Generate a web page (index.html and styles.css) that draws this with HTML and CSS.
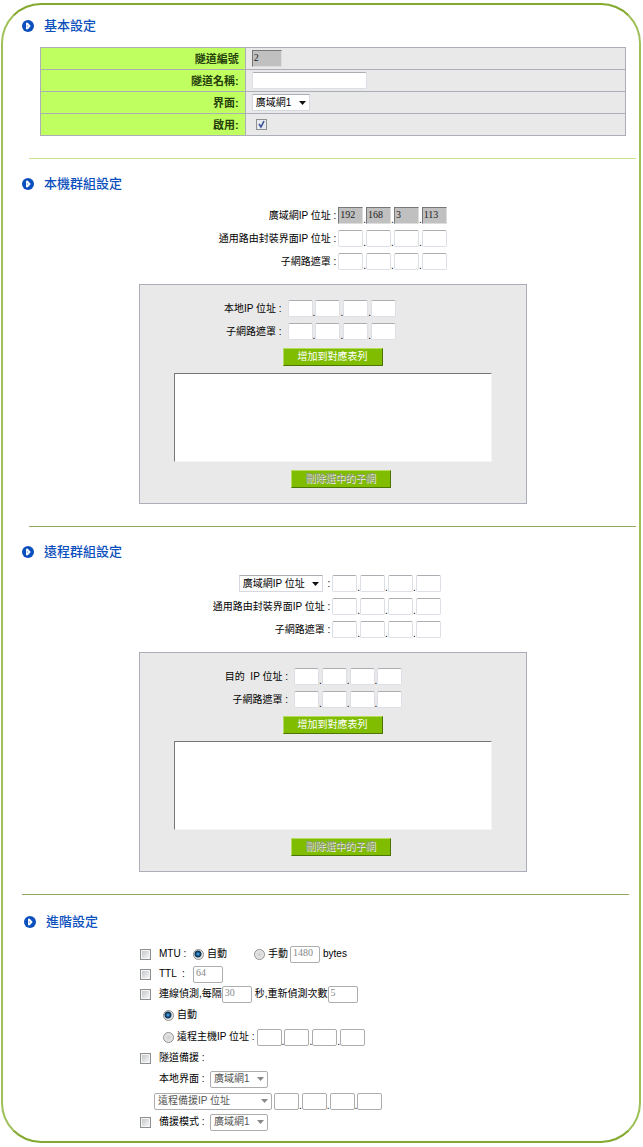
FILE: index.html
```html
<!DOCTYPE html>
<html lang="zh-Hant">
<head>
    <meta charset="UTF-8">
    <meta name="viewport" content="width=device-width, initial-scale=1.0">
    <title>隧道設定</title>
    <link rel="stylesheet" href="styles.css">
</head>
<body>
<svg width="0" height="0" class="defs">
    <symbol id="bullet" viewBox="0 0 12 12">
        <circle cx="6" cy="6" r="6" fill="#0c50bd"/>
        <path d="M4 2.7h1.8L8.7 6 5.8 9.3H4z" fill="#fff"/>
        <path d="M4.800 4.400v3.200L6.400 6z" fill="#8fb0e2"/>
    </symbol>
</svg>
<form class="frame">
    <!-- 基本設定 -->
    <h2 class="title"><svg class="bullet"><use href="#bullet"/></svg>基本設定</h2>
    <table class="basic">
        <tr>
            <th><label for="tunnelNo">隧道編號</label></th>
            <td><input type="text" id="tunnelNo" class="num locked" value="2" readonly></td>
        </tr>
        <tr>
            <th><label for="tunnelName">隧道名稱:</label></th>
            <td><input type="text" id="tunnelName" class="name"></td>
        </tr>
        <tr>
            <th><label for="iface">界面:</label></th>
            <td><select id="iface" class="wan"><option>廣域網1</option></select></td>
        </tr>
        <tr>
            <th><label for="enable">啟用:</label></th>
            <td><input type="checkbox" id="enable" class="enable" checked></td>
        </tr>
    </table>
    <hr class="light">

    <!-- 本機群組設定 -->
    <h2 class="title"><svg class="bullet"><use href="#bullet"/></svg>本機群組設定</h2>
    <div class="content">
        <div class="group">
            <div class="row">
                <label for="lw1">廣域網IP 位址 :</label>
                <span class="ip"><input type="text" id="lw1" class="locked" value="192" readonly>.<input type="text" class="locked" value="168" aria-label="廣域網IP 2" readonly>.<input type="text" class="locked" value="3" aria-label="廣域網IP 3" readonly>.<input type="text" class="locked" value="113" aria-label="廣域網IP 4" readonly></span>
            </div>
            <div class="row">
                <label for="lg1">通用路由封裝界面IP 位址 :</label>
                <span class="ip"><input type="text" id="lg1">.<input type="text" aria-label="界面IP 2">.<input type="text" aria-label="界面IP 3">.<input type="text" aria-label="界面IP 4"></span>
            </div>
            <div class="row">
                <label for="lm1">子網路遮罩 :</label>
                <span class="ip"><input type="text" id="lm1">.<input type="text" aria-label="遮罩 2">.<input type="text" aria-label="遮罩 3">.<input type="text" aria-label="遮罩 4"></span>
            </div>
        </div>
        <div class="panel">
            <div class="row">
                <label for="li1">本地IP 位址 :</label>
                <span class="ip"><input type="text" id="li1">.<input type="text" aria-label="本地IP 2">.<input type="text" aria-label="本地IP 3">.<input type="text" aria-label="本地IP 4"></span>
            </div>
            <div class="row">
                <label for="ls1">子網路遮罩 :</label>
                <span class="ip"><input type="text" id="ls1">.<input type="text" aria-label="遮罩 2">.<input type="text" aria-label="遮罩 3">.<input type="text" aria-label="遮罩 4"></span>
            </div>
            <button type="button" class="add">增加到對應表列</button>
            <select class="list" size="5" aria-label="本地對應表列"></select>
            <button type="button" class="delete" disabled>刪除選中的子網</button>
        </div>
    </div>
    <hr>

    <!-- 遠程群組設定 -->
    <h2 class="title"><svg class="bullet"><use href="#bullet"/></svg>遠程群組設定</h2>
    <div class="content">
        <div class="group remote">
            <div class="row">
                <label for="rw1"><select class="type" aria-label="遠程類型"><option>廣域網IP 位址</option></select> :</label>
                <span class="ip"><input type="text" id="rw1">.<input type="text" aria-label="廣域網IP 2">.<input type="text" aria-label="廣域網IP 3">.<input type="text" aria-label="廣域網IP 4"></span>
            </div>
            <div class="row">
                <label for="rg1">通用路由封裝界面IP 位址 :</label>
                <span class="ip"><input type="text" id="rg1">.<input type="text" aria-label="界面IP 2">.<input type="text" aria-label="界面IP 3">.<input type="text" aria-label="界面IP 4"></span>
            </div>
            <div class="row">
                <label for="rm1">子網路遮罩 :</label>
                <span class="ip"><input type="text" id="rm1">.<input type="text" aria-label="遮罩 2">.<input type="text" aria-label="遮罩 3">.<input type="text" aria-label="遮罩 4"></span>
            </div>
        </div>
        <div class="panel remote">
            <div class="row">
                <label for="ri1">目的&nbsp; IP 位址 :</label>
                <span class="ip"><input type="text" id="ri1">.<input type="text" aria-label="目的IP 2">.<input type="text" aria-label="目的IP 3">.<input type="text" aria-label="目的IP 4"></span>
            </div>
            <div class="row">
                <label for="rs1">子網路遮罩 :</label>
                <span class="ip"><input type="text" id="rs1">.<input type="text" aria-label="遮罩 2">.<input type="text" aria-label="遮罩 3">.<input type="text" aria-label="遮罩 4"></span>
            </div>
            <button type="button" class="add">增加到對應表列</button>
            <select class="list" size="5" aria-label="遠程對應表列"></select>
            <button type="button" class="delete" disabled>刪除選中的子網</button>
        </div>
    </div>
    <hr class="last">

    <!-- 進階設定 -->
    <h2 class="title adv-title"><svg class="bullet"><use href="#bullet"/></svg>進階設定</h2>
    <div class="advanced">
        <div class="opt">
            <input type="checkbox" id="mtu">
            <label for="mtu" class="key">MTU :</label>
            <input type="radio" name="mtuMode" id="mtuAuto" checked>
            <label for="mtuAuto" class="auto">自動</label>
            <input type="radio" name="mtuMode" id="mtuManual">
            <label for="mtuManual">手動</label>
            <input type="text" class="num" value="1480" aria-label="MTU bytes" disabled>
            <span class="unit">bytes</span>
        </div>
        <div class="opt">
            <input type="checkbox" id="ttl">
            <label for="ttl" class="key">TTL &nbsp;:</label>
            <input type="text" class="num" value="64" aria-label="TTL" disabled>
        </div>
        <div class="opt">
            <input type="checkbox" id="dpd">
            <label for="dpd">連線偵測,每隔</label>
            <input type="text" class="num flush" value="30" aria-label="秒" disabled>
            <label for="retry" class="unit">秒,重新偵測次數</label>
            <input type="text" class="num flush" id="retry" value="5" disabled>
        </div>
        <div class="opt tall sub">
            <input type="radio" name="dpdMode" id="dpdAuto" checked>
            <label for="dpdAuto">自動</label>
        </div>
        <div class="opt tall sub">
            <input type="radio" name="dpdMode" id="dpdHost">
            <label for="dpdHost">遠程主機IP 位址 :</label>
            <span class="ip"><input type="text" aria-label="主機IP 1" disabled>.<input type="text" aria-label="主機IP 2" disabled>.<input type="text" aria-label="主機IP 3" disabled>.<input type="text" aria-label="主機IP 4" disabled></span>
        </div>
        <div class="opt">
            <input type="checkbox" id="backup">
            <label for="backup">隧道備援 :</label>
        </div>
        <div class="opt tall nobox">
            <label for="localIf" class="wide">本地界面 :</label>
            <select id="localIf" class="wan" disabled><option>廣域網1</option></select>
        </div>
        <div class="opt tall backup-ip">
            <select class="backup-type" aria-label="遠程備援" disabled><option>遠程備援IP 位址</option></select>
            <span class="ip"><input type="text" aria-label="備援IP 1" disabled>.<input type="text" aria-label="備援IP 2" disabled>.<input type="text" aria-label="備援IP 3" disabled>.<input type="text" aria-label="備援IP 4" disabled></span>
        </div>
        <div class="opt">
            <input type="checkbox" id="mode">
            <label for="mode" class="wide">備援模式 :</label>
            <select class="wan" aria-label="備援模式" disabled><option>廣域網1</option></select>
        </div>
    </div>
</form>
</body>
</html>
```
FILE: styles.css
```css
* { box-sizing: border-box; }
body { margin: 0; background: #fff; color: #000; font: 10px/14px "Liberation Sans", "Noto Sans CJK TC", sans-serif; }
.defs { position: absolute; }
.frame { margin: 3px 2px 4px 1px; padding: 11px 0 9px; border: 2px solid; border-color: #84a92f #9fc059; border-radius: 40px; }

/* headings and rules */
.title { display: flex; align-items: center; gap: 10px; height: 20px; margin: 15px 0 0 19px; font-size: 13px; font-weight: 500; color: #0c50bd; }
.title:first-child { margin-top: 0; }
.adv-title { margin: 17px 0 0 21px; }
.bullet { width: 12px; height: 12px; }
hr { height: 1px; margin: 22px 3px 0 26px; border: 0; background: #92a75c; }
hr.light { background: #c9e38a; }
hr.last { margin: 22px 10px 0 19px; }

/* text boxes */
input, select, button { margin: 0; font: inherit; color: inherit; }
input[type="text"] { height: 17px; padding: 0 1px 3px; border: 1px solid #dcdfe6; border-top-color: #abadb3; border-radius: 2px; background: #fff; font-family: "Liberation Serif", serif; }
input[type="text"].locked { border-color: #777 #ddd #ddd #777; border-radius: 0; background: #c0c0c0; color: #222; }
input[type="text"]:disabled { border-color: #adadad; color: #888; padding: 0 2px 4px; }
input.num { width: 30px; }
input.name { width: 115px; }
.ip { display: flex; align-items: flex-end; height: 17px; line-height: 8px; }
.ip input[type="text"] { width: 25px; }

/* drop-downs */
select { height: 17px; padding: 0 3px; border: 1px solid #d5d8e0; border-top-color: #abadb3; border-radius: 1px; appearance: none; background: #fff url("data:image/svg+xml,%3Csvg xmlns='http://www.w3.org/2000/svg' width='7' height='4'%3E%3Cpath d='M0 0h7L3.500 4z' fill='%23111'/%3E%3C/svg%3E") no-repeat right 3px center; }
select:disabled { border-color: #adadad; border-radius: 2px; color: #555; opacity: 1; background-image: url("data:image/svg+xml,%3Csvg xmlns='http://www.w3.org/2000/svg' width='7' height='4'%3E%3Cpath d='M0 0h7L3.500 4z' fill='%23888'/%3E%3C/svg%3E"); }
select.wan { width: 58px; }
select.type { width: 84px; margin-right: 2px; }
select.backup-type { width: 118px; }

/* tick boxes and radios */
input[type="checkbox"], input[type="radio"] { flex: none; width: 11px; height: 11px; border: 1px solid #8e8f8f; appearance: none; background: linear-gradient(135deg, #c3c7cc, #f6f6f6) center / 7px 7px no-repeat #f4f4f4; }
input[type="checkbox"]:checked { background: url("data:image/svg+xml,%3Csvg xmlns='http://www.w3.org/2000/svg' width='9' height='9'%3E%3Cpath d='M2 4l2 3 3-6' fill='none' stroke='%23384f94' stroke-width='1.600'/%3E%3C/svg%3E") center no-repeat #e6e9ee; }
input[type="radio"] { border-radius: 50%; background: radial-gradient(#d0d0d0, #f2f2f2); }
input[type="radio"]:checked { background: radial-gradient(circle at 4px 4px, #5cc0ea 0, #0d4a83 2px, #10304f 3px, #e6e6e6 4px); }

/* basic settings */
.basic { width: calc(100% - 50px); margin: 11px 13px 0 37px; border-collapse: collapse; background: #e9e9e9; }
.basic th, .basic td { height: 22px; padding: 0 6px; border: 1px solid #abaeb8; }
.basic th { width: 35%; background: #bfff60; color: #26400c; font-size: 11px; text-align: right; }
.basic input, .basic select { display: block; }
.basic .enable { margin-left: 4px; }

/* local and remote groups */
.content { padding: 10px 3px 0 26px; }
.group { display: flex; flex-direction: column; align-items: center; }
.group.remote { padding-right: 12px; }
.row { display: flex; align-items: center; height: 23px; }
.row label { width: 118px; margin-right: 2px; text-align: right; white-space: nowrap; }
.panel { display: flex; flex-direction: column; align-items: center; max-width: 388px; margin: 11px auto 0; padding: 12px 34px 15px; border: 1px solid #abaeb8; background: #e9e9e9; }
.panel .row { width: 100%; }
.panel .row label { width: 34%; margin-right: 6px; }
.panel.remote .row label { width: 36%; }
.list { width: 100%; height: 89px; margin: 7px 0 8px; border: 1px solid; border-color: #777 #f4f4f4 #f4f4f4 #777; border-radius: 0; background: #fff; }
button { width: 100px; height: 18px; padding: 0 0 1px; border: 1px solid; border-color: #b5dc5c #4b7400 #4b7400 #b5dc5c; background: #80bd00; color: #fff; line-height: 14px; }
.add { margin-top: 5px; }
.delete { margin-left: 16px; color: #8f9683; text-shadow: 1px 1px #eee; }

/* advanced settings */
.advanced { margin: 12px 0 0 137px; }
.opt { display: flex; align-items: center; height: 20px; white-space: nowrap; }
.opt.tall { height: 22px; }
.opt input[type="checkbox"] { margin-right: 8px; }
.opt input[type="radio"] { margin-right: 3px; }
.key { width: 34px; }
.auto { width: 47px; }
.opt .num { margin-left: 2px; }
.opt .num.flush, .key + .num { margin-left: 0; }
.unit { margin-left: 3px; }
.sub { padding-left: 23px; }
.sub .ip { margin-left: 2px; }
.nobox { padding-left: 19px; }
.wide { width: 51px; }
.backup-ip { padding-left: 14px; gap: 2px; }
```
